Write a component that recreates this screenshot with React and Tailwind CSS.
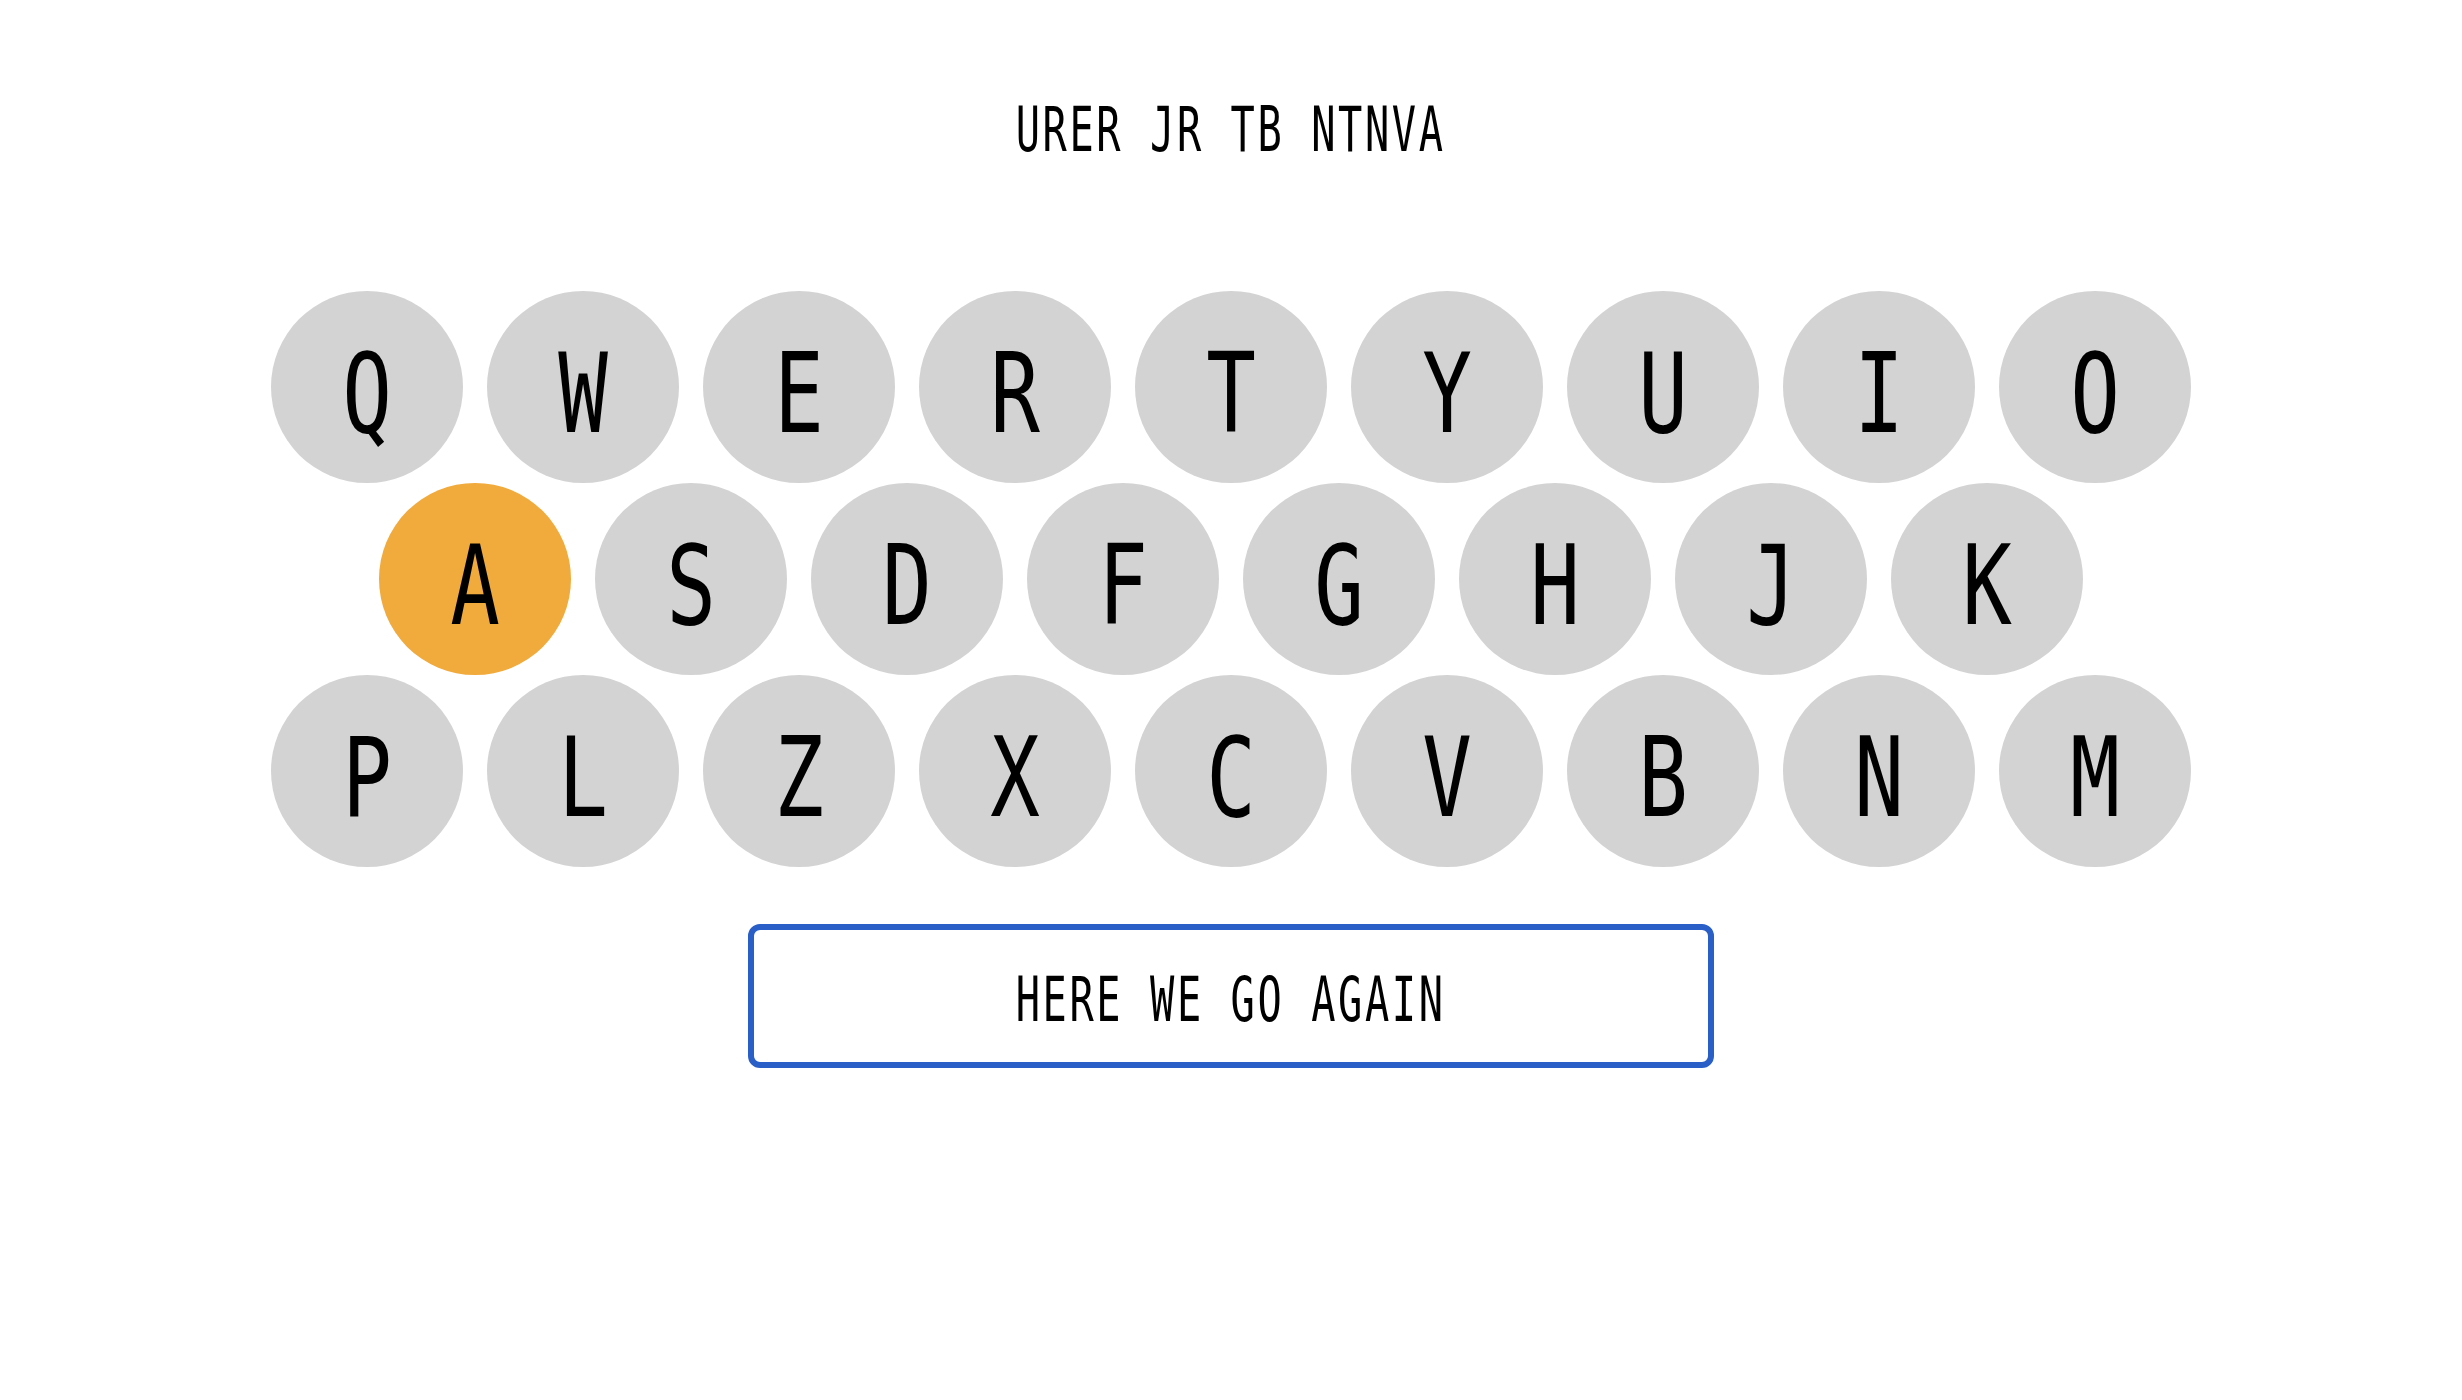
import React from 'react';

const rows = [
  ['Q', 'W', 'E', 'R', 'T', 'Y', 'U', 'I', 'O'],
  ['A', 'S', 'D', 'F', 'G', 'H', 'J', 'K'],
  ['P', 'L', 'Z', 'X', 'C', 'V', 'B', 'N', 'M'],
];

const Key = ({ letter, active }) => (
  <div
    className={`flex items-center justify-center w-[192px] h-[192px] rounded-full pt-[14px] ${
      active ? 'bg-[#f1aa3c]' : 'bg-[#d3d3d3]'
    }`}
  >
    <span className="inline-block text-[110px] leading-none text-black scale-x-[0.75]">
      {letter}
    </span>
  </div>
);

const App = () => {
  const selected = 'A';

  return (
    <div className="min-h-screen bg-white flex flex-col items-center pt-[99px] font-['DejaVu_Sans_Mono',monospace]">
      {/* Puzzle line */}
      <h1 className="text-[62px] leading-none text-black tracking-[4px] scale-x-[0.65] whitespace-pre">
        URER JR TB NTNVA
      </h1>

      {/* Keyboard */}
      <div className="mt-[130px] flex flex-col items-center">
        {rows.map((row, i) => (
          <div key={i} className="flex gap-[24px]">
            {row.map((l) => (
              <Key key={l} letter={l} active={l === selected} />
            ))}
          </div>
        ))}
      </div>

      {/* Reset */}
      <button className="mt-[57px] w-[966px] h-[144px] border-[6px] border-[#2a5fc8] rounded-[12px] bg-white flex items-center justify-center pt-[8px]">
        <span className="inline-block text-[62px] leading-none text-black tracking-[4px] scale-x-[0.65] whitespace-pre">
          HERE WE GO AGAIN
        </span>
      </button>
    </div>
  );
};

export default App;
